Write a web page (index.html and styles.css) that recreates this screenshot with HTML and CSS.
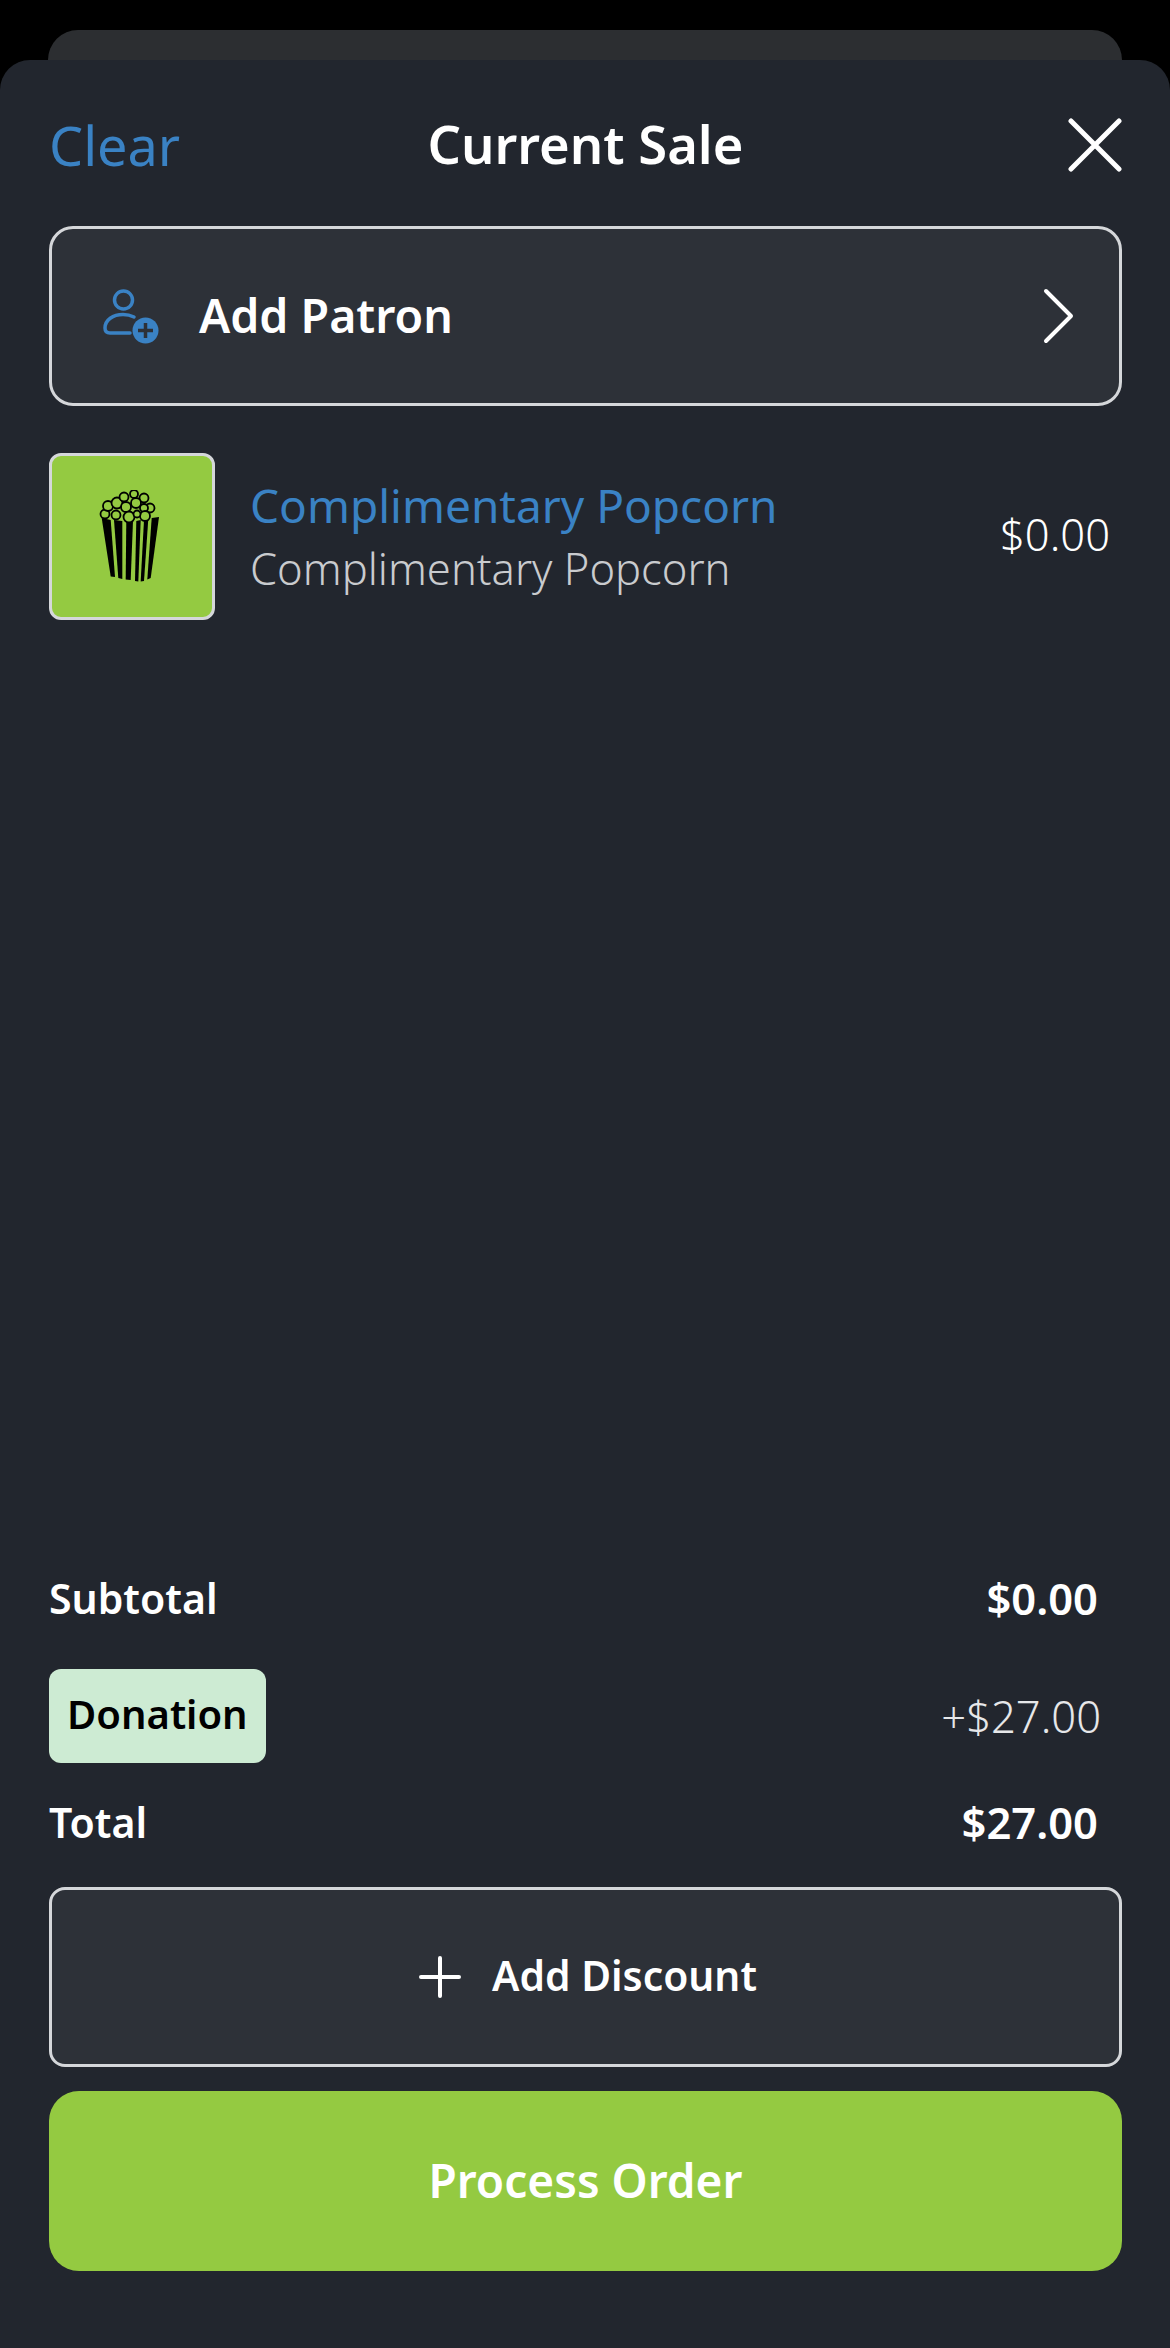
FILE: index.html
```html
<!DOCTYPE html>
<html lang="en">
<head>
    <meta charset="UTF-8">
    <meta name="viewport" content="width=device-width, initial-scale=1.0">
    <title>Current Sale</title>
    <link rel="stylesheet" href="styles.css">
</head>
<body>
    <div class="back-card"></div>
    <div class="sheet">
        <header class="sheet-header">
            <span class="clear">Clear</span>
            <h1>Current Sale</h1>
            <svg class="close" width="54" height="54" viewBox="0 0 54 54" fill="none" stroke="#fff" stroke-width="5" stroke-linecap="round">
                <path d="M3 3L51 51M51 3L3 51"/>
            </svg>
        </header>

        <div class="patron">
            <svg class="patron-icon" width="60" height="60" viewBox="0 0 60 60" fill="none">
                <circle cx="24.500" cy="14" r="9" stroke="#3a82c4" stroke-width="3.500"/>
                <path d="M35 31C31 29 28 28.500 24 28.500C14 28.500 6 34 6 42C6 45.500 8 47 11 47H31" stroke="#3a82c4" stroke-width="3.500" stroke-linecap="round"/>
                <circle cx="46.500" cy="44.500" r="13" fill="#3a82c4"/>
                <path d="M46.500 37V52M39 44.500H54" stroke="#2d3138" stroke-width="3.500"/>
            </svg>
            <span class="patron-label">Add Patron</span>
            <svg class="chevron" width="32" height="56" viewBox="0 0 32 56" fill="none" stroke="#fff" stroke-width="4" stroke-linecap="round" stroke-linejoin="round">
                <path d="M4 3L29 28L4 53"/>
            </svg>
        </div>

        <div class="item">
            <div class="thumb">
                <svg class="popcorn" width="62" height="94" viewBox="0 0 62 94">
                    <path d="M2.700 28L11.700 30L16 87L11.700 86.500Z"/>
                    <path d="M15 30L23.300 31L23.300 89L19.300 88Z"/>
                    <path d="M27.300 31L34 31L31.700 90L26.700 89.500Z"/>
                    <path d="M37.300 31L41.700 30L39.300 91.500L36 91Z"/>
                    <path d="M45 30L49.300 29L45 91L41.700 91.500Z"/>
                    <path d="M52.700 28L60 27L51.700 88L48.300 89.500Z"/>
                    <g fill="#94ca41" stroke="#000" stroke-width="1.800">
                        <circle cx="6" cy="24" r="4.500"/>
                        <circle cx="9" cy="16" r="5"/>
                        <circle cx="17" cy="25" r="4.500"/>
                        <circle cx="18" cy="13" r="5.500"/>
                        <circle cx="25" cy="7" r="4.500"/>
                        <circle cx="35" cy="4" r="4"/>
                        <circle cx="45" cy="8" r="4.500"/>
                        <circle cx="51" cy="18" r="4.500"/>
                        <circle cx="27" cy="17" r="5"/>
                        <circle cx="37" cy="13" r="5"/>
                        <circle cx="45" cy="18" r="4"/>
                        <circle cx="46" cy="26" r="5"/>
                        <circle cx="30" cy="27" r="5.500"/>
                        <circle cx="38" cy="24" r="3.500"/>
                    </g>
                </svg>
            </div>
            <div class="item-text">
                <div class="item-name">Complimentary Popcorn</div>
                <div class="item-sub">Complimentary Popcorn</div>
            </div>
            <div class="item-price">$0.00</div>
        </div>

        <div class="summary">
            <div class="row subtotal">
                <span>Subtotal</span>
                <span class="amount">$0.00</span>
            </div>
            <div class="row donation">
                <span class="badge">Donation</span>
                <span class="donation-amount">+$27.00</span>
            </div>
            <div class="row total">
                <span>Total</span>
                <span class="amount">$27.00</span>
            </div>
        </div>

        <div class="discount">
            <svg width="42" height="42" viewBox="0 0 42 42" fill="none" stroke="#fff" stroke-width="4" stroke-linecap="round">
                <path d="M21 2V40M2 21H40"/>
            </svg>
            <span class="discount-label">Add Discount</span>
        </div>
        <button class="process">Process Order</button>
    </div>
</body>
</html>
```

FILE: styles.css
```css
* {
    box-sizing: border-box;
}

body {
    margin: 0;
    height: 2348px;
    padding-top: 30px;
    display: flex;
    flex-direction: column;
    background-color: #000;
    color: #fff;
    font-family: "Noto Sans", sans-serif;
}

.back-card {
    height: 30px;
    margin: 0 48px;
    flex-shrink: 0;
    background-color: #2c2e31;
    border-radius: 30px 30px 0 0;
}

.sheet {
    flex: 1;
    display: flex;
    flex-direction: column;
    padding: 58px 48px 77px 49px;
    background-color: #22262e;
    border-radius: 30px 30px 0 0;
}

.sheet-header {
    display: grid;
    grid-template-columns: 1fr auto 1fr;
    align-items: center;
    height: 54px;
}

.clear {
    font-size: 54px;
    line-height: 50px;
    color: #3a82c4;
}

h1 {
    margin: 0 0 3px;
    font-size: 52.500px;
    line-height: 50px;
    font-weight: 600;
    text-align: center;
}

.close {
    justify-self: end;
}

.patron {
    display: flex;
    align-items: center;
    height: 180px;
    margin-top: 54px;
    padding: 0 45px 0 47px;
    background-color: #2d3138;
    border: 3px solid #d5d7da;
    border-radius: 24px;
}

.patron-label {
    flex: 1;
    margin-left: 40px;
    padding-bottom: 2px;
    font-size: 46.500px;
    font-weight: 600;
}

.item {
    display: flex;
    align-items: center;
    margin-top: 47px;
}

.thumb {
    width: 166px;
    height: 167px;
    display: flex;
    align-items: center;
    justify-content: center;
    background-color: #94ca41;
    border: 3px solid #d5d7da;
    border-radius: 12px;
}

.popcorn {
    margin-right: 4px;
}

.item-text {
    flex: 1;
    margin-left: 35px;
    padding-bottom: 2px;
}

.item-name {
    font-size: 46px;
    line-height: 64px;
    color: #3a82c4;
}

.item-sub {
    font-size: 43.500px;
    line-height: 62px;
    font-weight: 300;
    color: #c9cbce;
}

.item-price {
    margin-right: 12px;
    padding-bottom: 5px;
    font-size: 43.500px;
    font-weight: 300;
}

.summary {
    margin-top: auto;
}

.row {
    display: flex;
    align-items: center;
    justify-content: space-between;
    padding-right: 24px;
    font-size: 41px;
    font-weight: 600;
}

.row span {
    line-height: 56px;
}

.amount {
    font-size: 43.500px;
}

.subtotal,
.total {
    height: 60px;
}

.donation {
    margin: 41px 0 29px;
    padding-right: 21px;
}

.badge {
    padding: 0 18px 4px;
    height: 94px;
    display: flex;
    align-items: center;
    font-size: 40px;
    color: #000;
    background-color: #cdebd3;
    border-radius: 12px;
}

.donation-amount {
    font-size: 43.500px;
    font-weight: 300;
    color: #e6e7e9;
}

.discount {
    display: flex;
    align-items: center;
    justify-content: center;
    gap: 31px;
    height: 180px;
    margin-top: 35px;
    padding-left: 5px;
    background-color: #2d3138;
    border: 3px solid #d5d7da;
    border-radius: 16px;
}

.discount-label {
    padding-bottom: 5px;
    font-size: 40.800px;
    font-weight: 600;
}

.process {
    height: 180px;
    margin-top: 24px;
    padding-bottom: 3px;
    flex-shrink: 0;
    border: none;
    border-radius: 30px;
    background-color: #94ca41;
    color: #fff;
    font-family: inherit;
    font-size: 46px;
    font-weight: 600;
}
```
